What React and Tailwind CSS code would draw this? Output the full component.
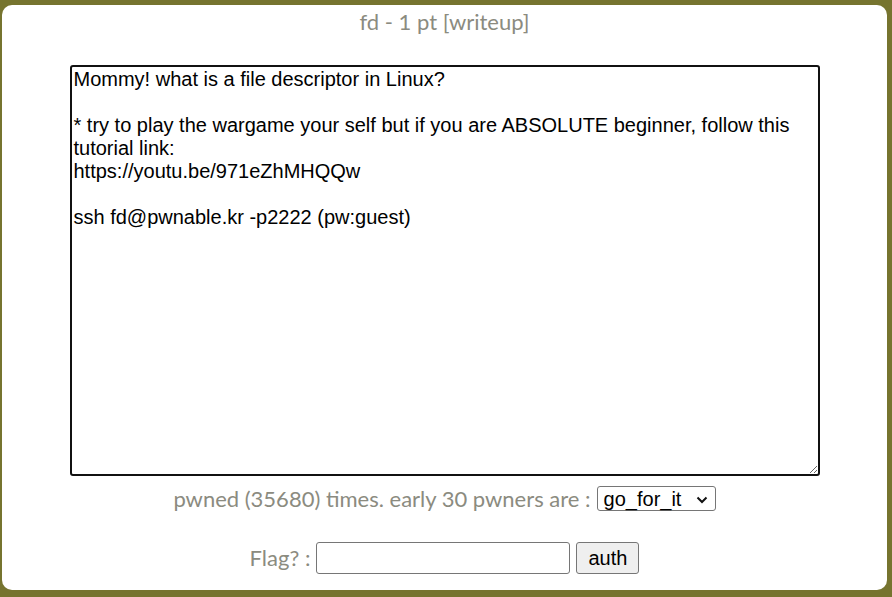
import React from "react";

export default function App() {
  const desc = `Mommy! what is a file descriptor in Linux?

* try to play the wargame your self but if you are ABSOLUTE beginner, follow this tutorial link:
https://youtu.be/971eZhMHQQw

ssh fd@pwnable.kr -p2222 (pw:guest)`;
  return (
    <div className="w-[892px] h-[597px] bg-[#76742f] pt-[5px] pl-[2px] pr-[5px] overflow-hidden">
      <div className="h-[585px] bg-white rounded-[10px] flex flex-col items-center text-[#8b8b80]" style={{ fontFamily: "Lato, 'Open Sans', sans-serif" }}>
        <div className="h-[32px] flex items-center text-[22px] leading-none pt-[2px]">fd - 1 pt [writeup]</div>
        <textarea
          readOnly
          defaultValue={desc}
          className="mt-[28px] w-[750px] h-[411px] border-2 border-[#111] rounded-[3px] px-[2px] pt-[1px] text-black text-[20px] leading-[23px] resize-y outline-none"
          style={{ fontFamily: "'Liberation Sans', Arial, sans-serif" }}
        />
        <div className="mt-[10px] flex items-center gap-[6px] text-[22px] h-[25px]">
          <span>pwned (35680) times. early 30 pwners are :</span>
          <div className="relative w-[119px] h-[25px] border border-[#767676] rounded-[3px] flex items-center pl-[6px] text-black text-[20px]" style={{ fontFamily: "'Liberation Sans', Arial, sans-serif" }}>
            <span className="leading-none">go_for_it</span>
            <svg className="absolute right-[7px] top-[9px]" width="12" height="8" viewBox="0 0 12 8" fill="none">
              <path d="M1.5 1.5 L6 6 L10.5 1.5" stroke="#111" strokeWidth="2" />
            </svg>
          </div>
        </div>
        <div className="mt-[30px] flex items-center text-[22px]">
          <span className="mr-[6px]">Flag? :</span>
          <input className="w-[254px] h-[32px] border border-[#767676] rounded-[3px] outline-none" />
          <button className="ml-[6px] w-[63px] h-[32px] bg-[#efefef] border border-[#767676] rounded-[3px] text-black text-[20px]" style={{ fontFamily: "'Liberation Sans', Arial, sans-serif" }}>auth</button>
        </div>
      </div>
    </div>
  );
}
